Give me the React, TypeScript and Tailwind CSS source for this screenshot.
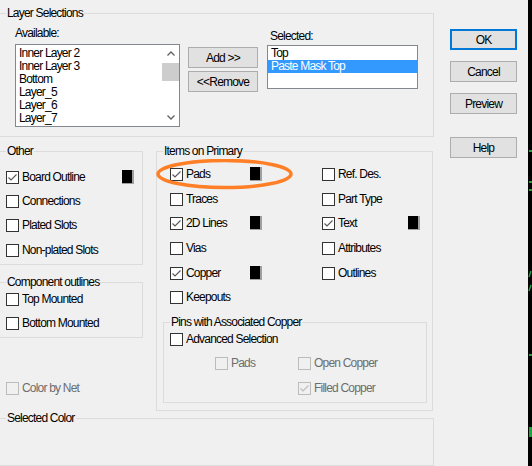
import React from "react";

type Item = { label: string; checked?: boolean; swatch?: boolean };

function Box({ checked = false, disabled = false }: { checked?: boolean; disabled?: boolean }) {
    return (
        <span
            className={`inline-flex w-[13px] h-[13px] shrink-0 border items-center justify-center ${
                disabled ? "border-[#bcbcbc] bg-[#f0f0f0]" : "border-[#333333] bg-white"
            }`}
        >
            {checked && (
                <svg width="11" height="11" viewBox="0 0 11 11">
                    <polyline
                        points="1.5,5.5 4,8 9.5,2.5"
                        fill="none"
                        stroke={disabled ? "#bcbcbc" : "#5a5a5a"}
                        strokeWidth="1.2"
                    />
                </svg>
            )}
        </span>
    );
}

function Swatch() {
    return <span className="ml-auto w-[12px] h-[14px] bg-black border-r-2 border-b border-[#a0a0a0]" />;
}

function Check({ item, disabled = false, className = "" }: { item: Item; disabled?: boolean; className?: string }) {
    return (
        <div className={`flex items-center h-[20px] ${className}`}>
            <Box checked={item.checked} disabled={disabled} />
            <span className={`ml-[3px] whitespace-nowrap ${disabled ? "text-[#6d6d6d]" : ""}`}>{item.label}</span>
            {item.swatch && <Swatch />}
        </div>
    );
}

function Group({ title, className = "", children }: { title: string; className?: string; children?: React.ReactNode }) {
    return (
        <fieldset className={`border border-[#dcdcdc] min-w-0 ${className}`}>
            <legend className="ml-[6px] px-[1px] leading-[14px]">{title}</legend>
            {children}
        </fieldset>
    );
}

function Button({ label, primary = false, className = "" }: { label: string; primary?: boolean; className?: string }) {
    return (
        <div
            className={`flex items-center justify-center h-[21px] bg-[#e1e1e1] ${
                primary ? "border-2 border-[#0078d7]" : "border border-[#adadad]"
            } ${className}`}
        >
            {label}
        </div>
    );
}

const available = ["Inner Layer 2", "Inner Layer 3", "Bottom", "Layer_5", "Layer_6", "Layer_7"];

const other: (Item & { mt: string })[] = [
    { label: "Board Outline", checked: true, swatch: true, mt: "mt-[9px]" },
    { label: "Connections", mt: "mt-[4px]" },
    { label: "Plated Slots", mt: "mt-[4px]" },
    { label: "Non-plated Slots", mt: "mt-[5px]" },
];

const primaryRows: { mt: string; left: Item; right?: Item }[] = [
    { mt: "mt-[6px]", left: { label: "Pads", checked: true, swatch: true }, right: { label: "Ref. Des." } },
    { mt: "mt-[5px]", left: { label: "Traces" }, right: { label: "Part Type" } },
    { mt: "mt-[4px]", left: { label: "2D Lines", checked: true, swatch: true }, right: { label: "Text", checked: true, swatch: true } },
    { mt: "mt-[5px]", left: { label: "Vias" }, right: { label: "Attributes" } },
    { mt: "mt-[5px]", left: { label: "Copper", checked: true, swatch: true }, right: { label: "Outlines" } },
    { mt: "mt-[4px]", left: { label: "Keepouts" } },
];

export default function App() {
    return (
        <div className="relative w-[532px] h-[466px] overflow-hidden flex bg-[#f0f0f0] text-[#000000] text-[12px] leading-[14px] tracking-[-0.8px] font-['Liberation_Sans_Narrow','Liberation_Sans',Arial,sans-serif]">
            <div className="w-[528px] flex">
                {/* dialog body */}
                <div className="w-[435px] -ml-px shrink-0 flex flex-col">
                    <Group title="Layer Selections" className="mt-[6px] pb-[9px]">
                        <div className="flex items-start">
                            <div className="ml-[15px] mt-[6px]">
                                <div className="h-[14px]">Available:</div>
                                <div className="mt-[4px] w-[165px] h-[83px] border border-[#828790] bg-white flex">
                                    <div className="flex-1 pt-[2px] pl-[3px]">
                                        {available.map((a) => (
                                            <div key={a} className="h-[13px] leading-[13px]">{a}</div>
                                        ))}
                                    </div>
                                    <div className="w-[17px] flex flex-col">
                                        <div className="h-[17px] flex items-center justify-center">
                                            <svg width="8" height="5" viewBox="0 0 8 5">
                                                <polyline points="0.5,4.5 4,1 7.5,4.5" fill="none" stroke="#606060" strokeWidth="1.3" />
                                            </svg>
                                        </div>
                                        <div className="mt-[1px] h-[18px] bg-[#cdcdcd]" />
                                        <div className="flex-1" />
                                        <div className="h-[17px] flex items-center justify-center">
                                            <svg width="8" height="5" viewBox="0 0 8 5">
                                                <polyline points="0.5,0.5 4,4 7.5,0.5" fill="none" stroke="#606060" strokeWidth="1.3" />
                                            </svg>
                                        </div>
                                    </div>
                                </div>
                            </div>
                            <div className="ml-[8px] mt-[27px] w-[70px] flex flex-col gap-[3px]">
                                <Button label="Add >>" />
                                <Button label="<<Remove" />
                            </div>
                            <div className="ml-[9px] mt-[9px]">
                                <div className="h-[14px] pl-[3px]">Selected:</div>
                                <div className="mt-[2px] w-[151px] h-[44px] border border-[#828790] bg-white pt-[1px]">
                                    <div className="h-[13px] leading-[13px] pl-[3px]">Top</div>
                                    <div className="h-[13px] leading-[13px] pl-[3px] bg-[#3399ff] text-white">Paste Mask Top</div>
                                </div>
                            </div>
                        </div>
                    </Group>

                    <div className="mt-[7px] flex items-start">
                        <div className="w-[144px] shrink-0 flex flex-col">
                            <Group title="Other" className="pb-[4px]">
                                {other.map((o) => (
                                    <Check key={o.label} item={o} className={`pl-[6px] pr-[8px] ${o.mt}`} />
                                ))}
                            </Group>
                            <Group title="Component outlines" className="mt-[10px] pb-[4px]">
                                <Check item={{ label: "Top Mounted" }} className="pl-[6px]" />
                                <Check item={{ label: "Bottom Mounted" }} className="pl-[6px] mt-[4px]" />
                            </Group>
                            <Check item={{ label: "Color by Net" }} disabled className="pl-[7px] mt-[40px]" />
                        </div>

                        <Group title="Items on Primary" className="ml-[13px] w-[277px] pb-[7px]">
                            {primaryRows.map((r) => (
                                <div key={r.left.label} className={`flex pl-[13px] ${r.mt}`}>
                                    <div className="w-[152px]">
                                        <Check item={r.left} className="w-[92px]" />
                                    </div>
                                    {r.right && <Check item={r.right} className="w-[98px]" />}
                                </div>
                            ))}
                            <Group title="Pins with Associated Copper" className="ml-[6px] mt-[8px] w-[264px] pb-[4px]">
                                <Check item={{ label: "Advanced Selection" }} className="pl-[6px]" />
                                <div className="flex pl-[51px] mt-[4px]">
                                    <Check item={{ label: "Pads" }} disabled className="w-[83px]" />
                                    <Check item={{ label: "Open Copper" }} disabled />
                                </div>
                                <Check item={{ label: "Filled Copper", checked: true }} disabled className="pl-[134px] mt-[5px]" />
                            </Group>
                        </Group>
                    </div>

                    <Group title="Selected Color" className="h-[90px]" />
                </div>

                {/* buttons */}
                <div className="ml-[16px] mt-[29px] w-[67px] flex flex-col">
                    <Button label="OK" primary />
                    <Button label="Cancel" className="mt-[11px]" />
                    <Button label="Preview" className="mt-[11px]" />
                    <Button label="Help" className="mt-[23px]" />
                </div>
            </div>

            {/* window behind, right edge */}
            <div className="w-[4px] bg-black">
                <svg width="4" height="466" viewBox="0 0 4 466">
                    <rect x="1" y="150" width="3" height="2" fill="#1fa33b" />
                    <rect x="1" y="181" width="3" height="2" fill="#1fa33b" />
                    <rect x="1" y="189" width="3" height="2" fill="#1fa33b" />
                    <path d="M1 277 L3 271" stroke="#1fa33b" strokeWidth="1.5" />
                    <path d="M1 291 L3 285" stroke="#1fa33b" strokeWidth="1.5" />
                    <rect x="1" y="354" width="3" height="2" fill="#1fa33b" />
                    <rect x="1" y="427" width="3" height="10" fill="#1fa33b" />
                </svg>
            </div>

            {/* hand-drawn highlight around Pads */}
            <svg className="absolute left-[156px] top-[159px]" width="137" height="31" viewBox="0 0 137 31">
                <ellipse cx="68.5" cy="15" rx="66.5" ry="13.5" fill="none" stroke="#ff7f27" strokeWidth="3.5" />
            </svg>
        </div>
    );
}
